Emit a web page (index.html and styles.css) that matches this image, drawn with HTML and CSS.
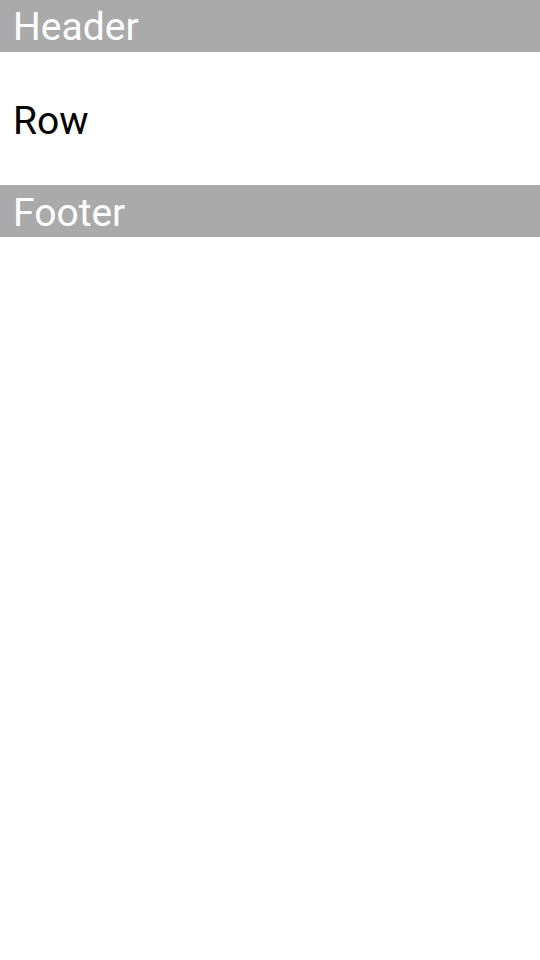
FILE: index.html
```
<!DOCTYPE html>
<html>
<head>
<meta charset="utf-8">
<link rel="stylesheet" href="styles.css">
</head>
<body>
<div class="bar header">Header</div>
<div class="row">Row</div>
<div class="bar footer">Footer</div>
</body>
</html>
```
FILE: styles.css
```
html, body {
  margin: 0;
  padding: 0;
  background: #ffffff;
  font-family: Roboto, "Noto Sans", sans-serif;
}
.bar {
  box-sizing: border-box;
  height: 52px;
  background: #aaaaaa;
  color: #ffffff;
  font-size: 39px;
  line-height: 41px;
  padding: 7px 0 0 13px;
}
.footer {
  padding-top: 8px;
}
.row {
  box-sizing: border-box;
  height: 133px;
  color: #000000;
  font-size: 39px;
  line-height: 41px;
  padding: 49px 0 0 13px;
}
```
